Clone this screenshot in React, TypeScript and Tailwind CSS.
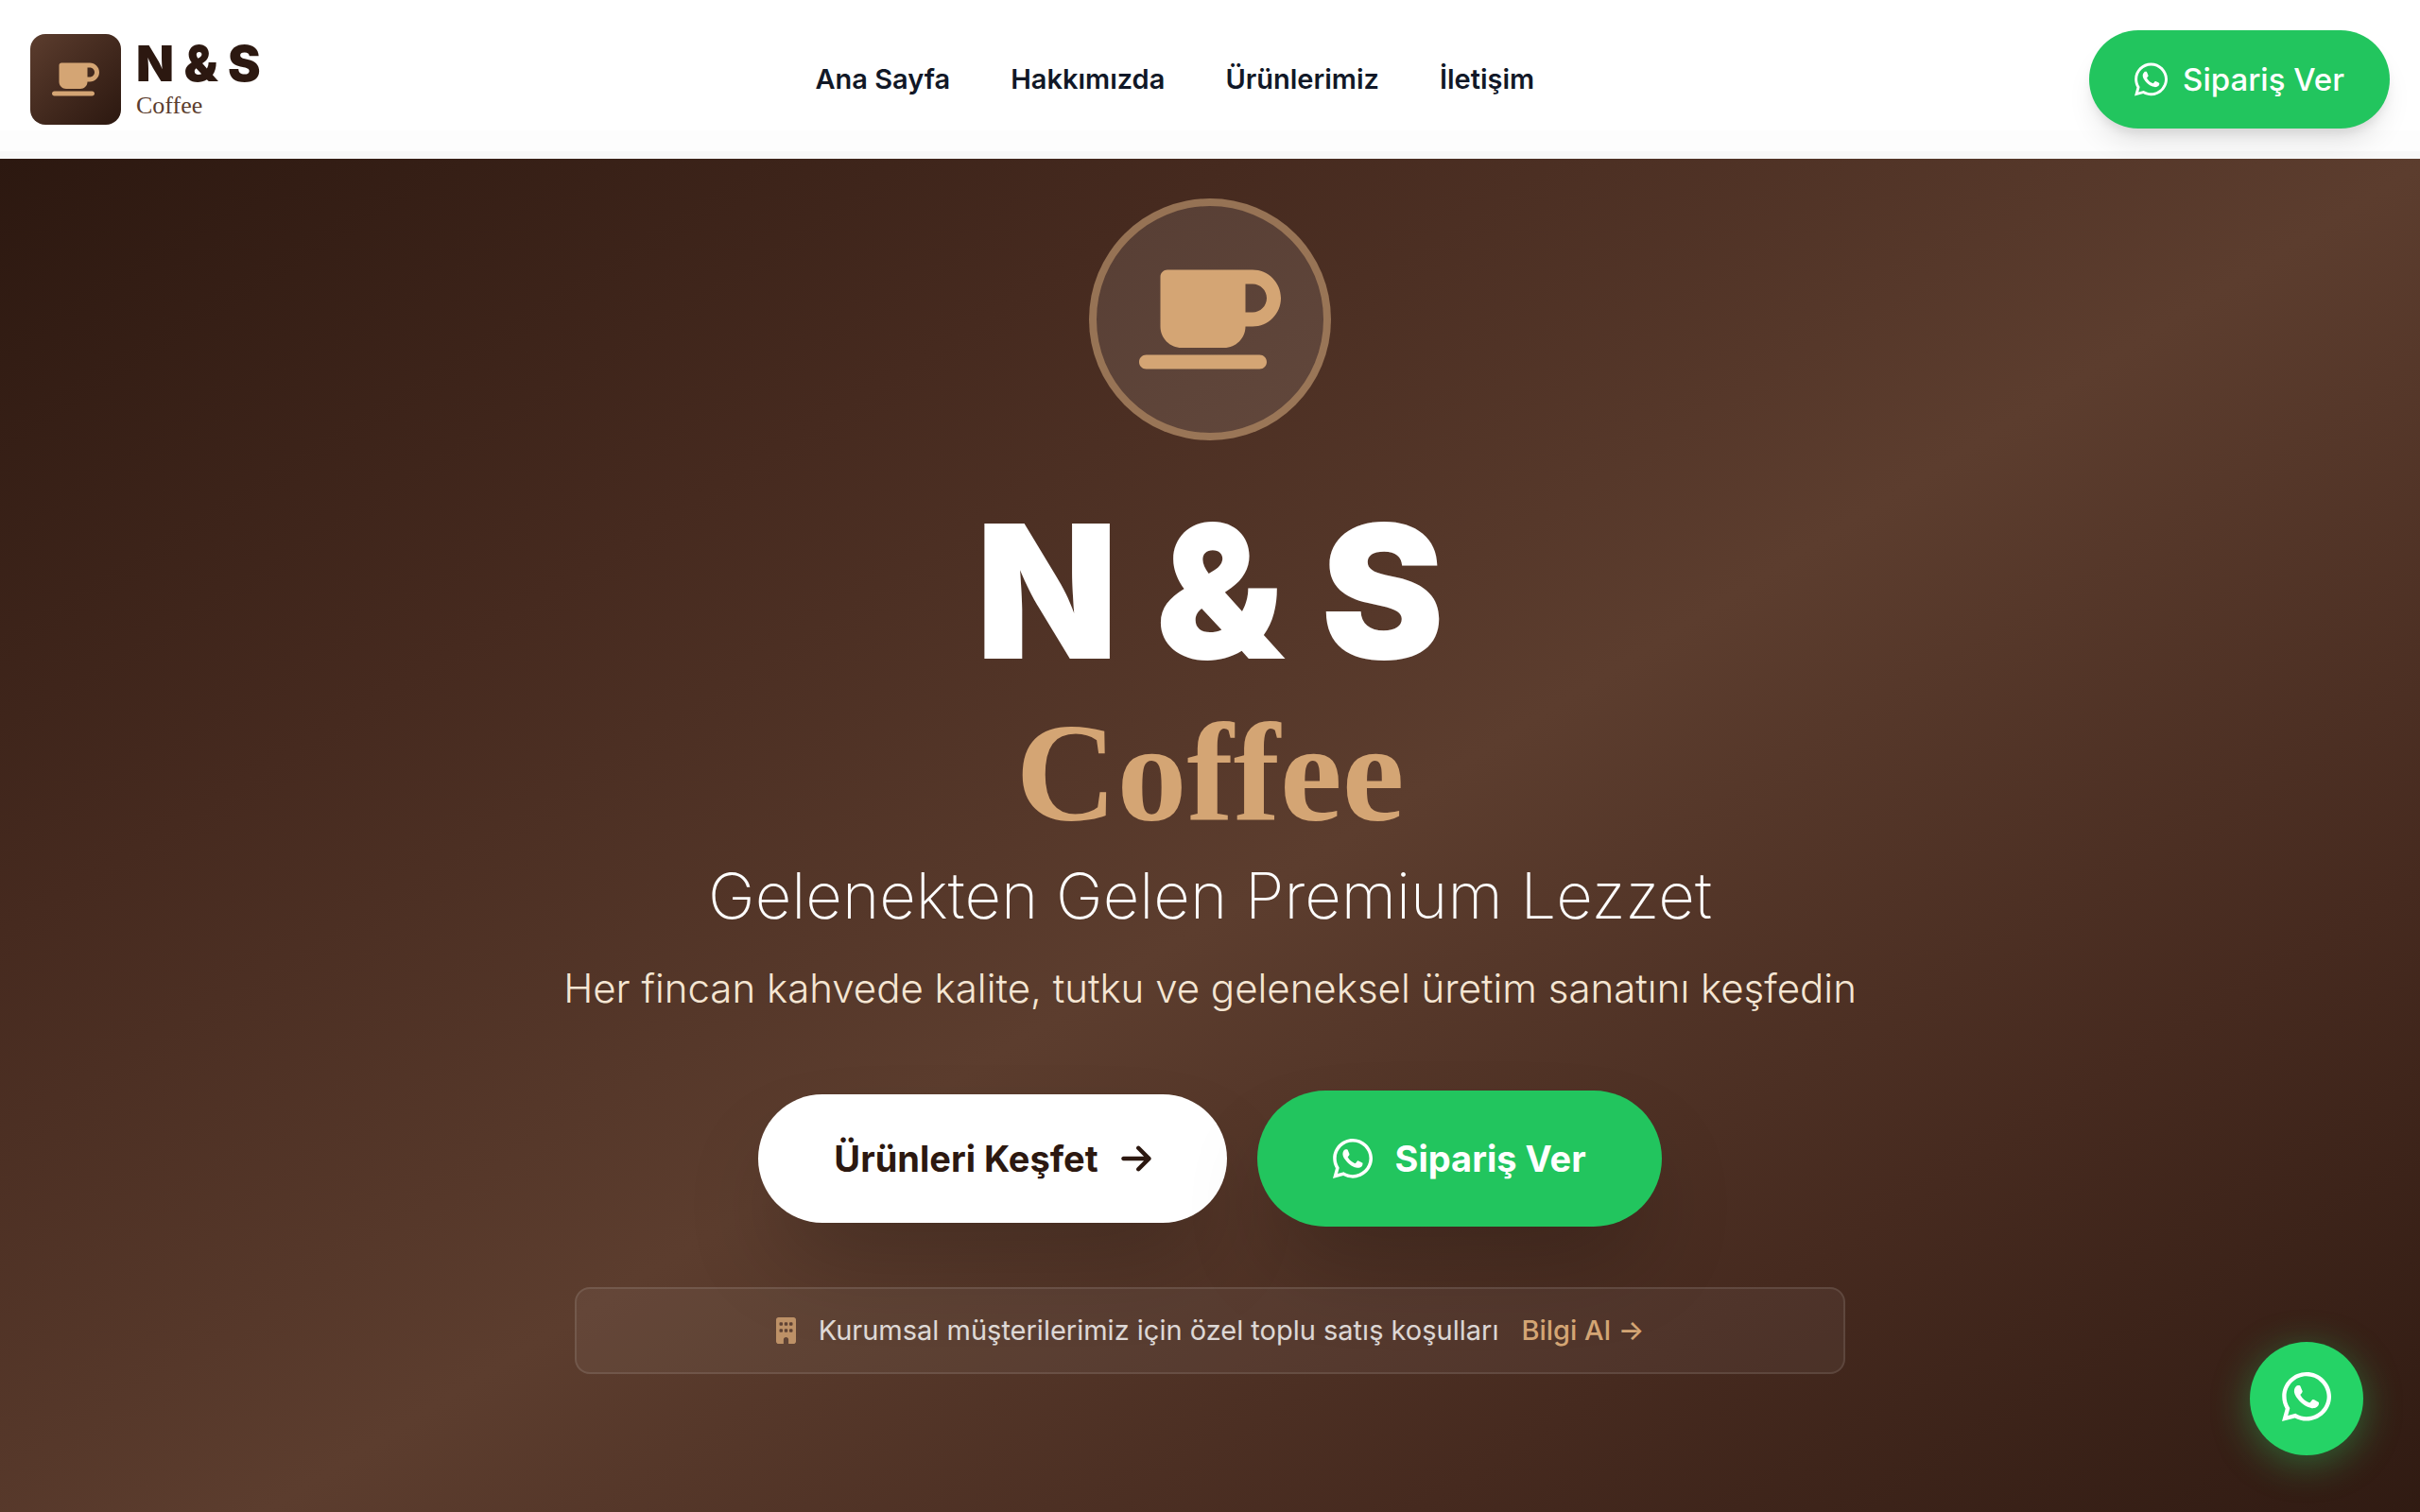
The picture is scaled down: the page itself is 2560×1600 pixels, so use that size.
import type { ReactNode } from "react";
import { FaArrowRight, FaBuilding, FaMugSaucer, FaWhatsapp } from "react-icons/fa6";

const links = [
  { label: "Ana Sayfa", href: "#ana-sayfa" },
  { label: "Hakkımızda", href: "#hakkimizda" },
  { label: "Ürünlerimiz", href: "#urunlerimiz" },
  { label: "İletişim", href: "#iletisim" },
];

function Header() {
  return (
    <header className="flex items-center justify-between bg-[linear-gradient(#ffffff_82%,#fdfdfd_82%,#fdfdfd_95%,#f8f8f8_95%)] px-8 py-8">
      <a href="#ana-sayfa" className="flex items-center gap-4">
        <span className="flex size-24 items-center justify-center rounded-2xl bg-linear-135 from-[#5c3d2e] to-[#2c1810] text-[#d4a574]">
          <FaMugSaucer className="h-10 w-[50px]" />
        </span>
        <span className="flex flex-col">
          <span className="text-[52px] leading-14 font-black text-[#2c1810]">N &amp; S</span>
          <span className="font-['Liberation_Serif',serif] text-[26px] leading-8 text-[#5c3d2e]">Coffee</span>
        </span>
      </a>
      <nav className="flex items-center gap-16">
        {links.map((l) => (
          <a key={l.href} href={l.href} className="text-[29px] leading-10 font-semibold text-[#111827]">
            {l.label}
          </a>
        ))}
      </nav>
      <button
        type="button"
        className="flex h-[104px] items-center gap-4 rounded-full bg-[#22c55e] px-12 text-[33px] leading-12 font-medium text-white shadow-[0_20px_30px_-6px_rgba(0,0,0,0.1),0_8px_12px_-4px_rgba(0,0,0,0.1)]"
      >
        <FaWhatsapp className="h-10 w-[35px]" />
        Sipariş Ver
      </button>
    </header>
  );
}

function HeroButton({ children, className }: { children: ReactNode; className: string }) {
  return (
    <button
      type="button"
      className={`flex items-center gap-6 rounded-full px-20 text-[38px] leading-14 font-bold shadow-[0_50px_100px_-24px_rgba(0,0,0,0.25)] ${className}`}
    >
      {children}
    </button>
  );
}

function Hero() {
  return (
    <main className="flex flex-1 flex-col items-center bg-[linear-gradient(148deg,#2c1810_0%,#462a1f_27%,#5c3d2e_53%,#462a1f_78%,#2c1810_104%)] px-8 pt-[42px] text-center">
      <div className="flex size-64 items-center justify-center rounded-full border-8 border-[#d4a574]/50 bg-white/10 text-[#d4a574]">
        <FaMugSaucer className="h-[120px] w-[150px]" />
      </div>
      <h1 className="mt-16 flex flex-col items-center">
        <span className="text-[196px] leading-[192px] font-black text-white">N &amp; S</span>
        <span className="font-['Liberation_Serif',serif] text-[148px] leading-[192px] font-bold text-[#d4a574]">
          Coffee
        </span>
      </h1>
      <p className="text-[67px] leading-[68px] font-extralight text-white">Gelenekten Gelen Premium Lezzet</p>
      <p className="mt-8 text-[42px] leading-16 font-light text-[#f5e6d3]">
        Her fincan kahvede kalite, tutku ve geleneksel üretim sanatını keşfedin
      </p>
      <div className="mt-19 flex items-center gap-8">
        <HeroButton className="h-[136px] bg-white text-[#2c1810]">
          Ürünleri Keşfet
          <FaArrowRight className="h-9 w-8" />
        </HeroButton>
        <HeroButton className="h-36 bg-[#22c55e] text-white">
          <FaWhatsapp className="h-12 w-[42px]" />
          Sipariş Ver
        </HeroButton>
      </div>
      <div className="mt-16 flex w-full max-w-[1344px] items-center justify-center gap-6 rounded-2xl border-2 border-white/10 bg-white/5 p-6 text-[29px] leading-10 text-white/80">
        <FaBuilding className="h-7 w-[21px] text-[#d4a574]/80" />
        <span>Kurumsal müşterilerimiz için özel toplu satış koşulları</span>
        <a href="#kurumsal" className="font-medium text-[#d4a574]">
          Bilgi Al →
        </a>
      </div>
    </main>
  );
}

export default function App() {
  return (
    <div className="flex min-h-screen flex-col font-['Inter',sans-serif]">
      <Header />
      <Hero />
      <a
        href="#whatsapp"
        aria-label="WhatsApp"
        className="fixed right-[60px] bottom-[60px] flex size-30 items-center justify-center rounded-full bg-[#25d366] pb-1 text-white shadow-[0_8px_40px_rgba(37,211,102,0.4)]"
      >
        <FaWhatsapp className="h-15 w-[52px]" />
      </a>
    </div>
  );
}
